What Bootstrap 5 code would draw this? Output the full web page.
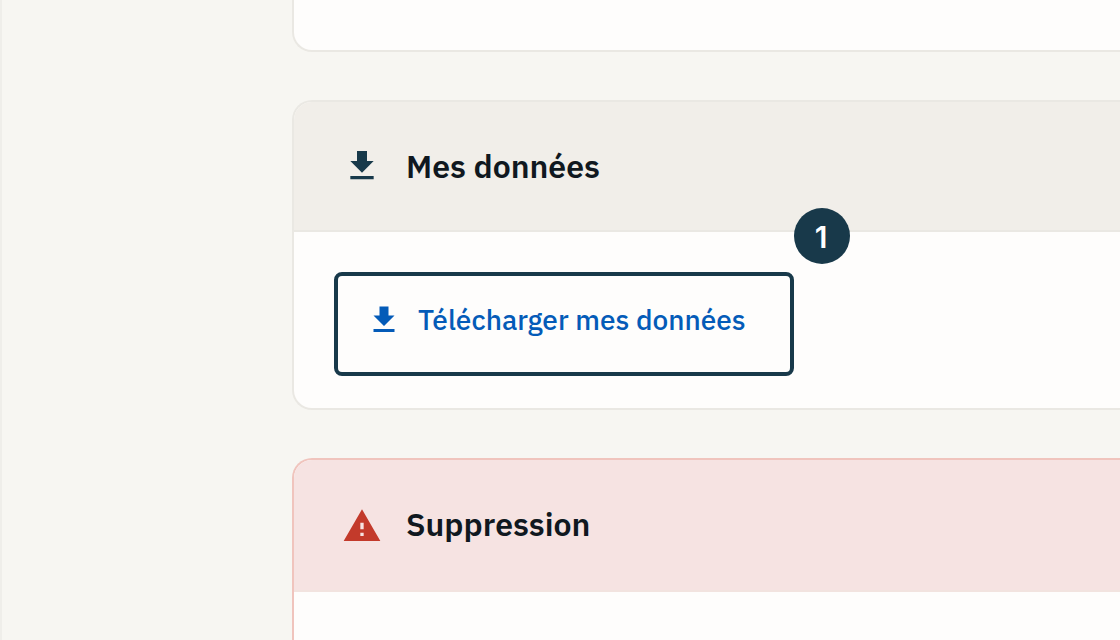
<!DOCTYPE html>
<html lang="fr">
<head>
<meta charset="utf-8">
<meta name="viewport" content="width=device-width, initial-scale=1">
<title>Mes données</title>
<link href="https://cdn.jsdelivr.net/npm/bootstrap@5.3.0/dist/css/bootstrap.min.css" rel="stylesheet">
<style>
  body { background: #f7f6f2; color: #101820; font-family: "IBM Plex Sans", "Open Sans", sans-serif; }
  .page { height: 640px; border-left: 2px solid #efeeea; padding-left: 290px; }
  .stack { gap: 48px; }
  .panel { --bs-card-border-radius: 20px; --bs-card-inner-border-radius: 18px; --bs-card-border-width: 2px;
    --bs-card-border-color: #eae8e3; --bs-card-bg: #fefdfc; --bs-card-cap-bg: #f1eee9;
    border-right: 0; border-top-right-radius: 0; border-bottom-right-radius: 0; width: 828px; flex-shrink: 0; }
  .panel-first { height: 52px; border-top: 0; border-top-left-radius: 0; }
  .panel-data { height: 310px; }
  .panel-danger { height: 300px; --bs-card-border-color: #f0c4bd; --bs-card-cap-bg: #f6e3e2; }
  .panel .card-header { height: 130px; flex: none; padding: 0 48px; gap: 24px; border-top-right-radius: 0; border-bottom-color: #eae8e3; }
  .panel-danger .card-header { height: 132px; padding-top: 2px; border-bottom-color: #f2e3df; }
  .panel .card-body { padding: 40px; }
  .panel h2 { font-size: 32px; line-height: 40px; font-weight: 600; }
  .panel-danger h2 { margin-top: -4px; }
  .ico { width: 40px; height: 40px; fill: #18394a; flex: none; }
  .ico-danger { fill: #c33a2b; }
  .callout-box { width: 460px; height: 104px; border: 4px solid #18394a; border-radius: 8px; padding: 26px 28px; }
  .download { color: #045bb8; font-size: 28px; line-height: 36px; font-weight: 500; gap: 16px; white-space: nowrap; }
  .download .ico { width: 36px; height: 36px; fill: #045bb8; }
  .step { width: 56px; height: 56px; left: 456px; top: -68px; background: #18394a; color: #fff;
    font: 600 30px/1 "Inter", sans-serif; padding-top: 1px; padding-right: 2px; }
</style>
</head>
<body class="overflow-hidden">
<main class="page overflow-hidden">
  <div class="stack d-flex flex-column">
    <section class="card panel panel-first"></section>
    <section class="card panel panel-data">
      <div class="card-header d-flex align-items-center">
        <svg class="ico" viewBox="0 0 24 24" aria-hidden="true"><path d="M19 9h-4V3H9v6H5l7 7 7-7zM5 18v2h14v-2H5z"/></svg>
        <h2 class="mb-0">Mes données</h2>
      </div>
      <div class="card-body">
        <div class="callout-box position-relative">
          <a href="#" class="download d-flex align-items-center text-decoration-none">
            <svg class="ico" viewBox="0 0 24 24" aria-hidden="true"><path d="M19 9h-4V3H9v6H5l7 7 7-7zM5 18v2h14v-2H5z"/></svg>
            <span>Télécharger mes données</span>
          </a>
          <span class="step position-absolute rounded-circle d-flex align-items-center justify-content-center">1</span>
        </div>
      </div>
    </section>
    <section class="card panel panel-danger">
      <div class="card-header d-flex align-items-center">
        <svg class="ico ico-danger" viewBox="0 0 24 24" aria-hidden="true"><path d="M1 21h22L12 2 1 21zm12-3h-2v-2h2v2zm0-4h-2v-4h2v4z"/></svg>
        <h2 class="mb-0">Suppression</h2>
      </div>
      <div class="card-body"></div>
    </section>
  </div>
</main>
<script src="https://cdn.jsdelivr.net/npm/bootstrap@5.3.0/dist/js/bootstrap.bundle.min.js"></script>
</body>
</html>
